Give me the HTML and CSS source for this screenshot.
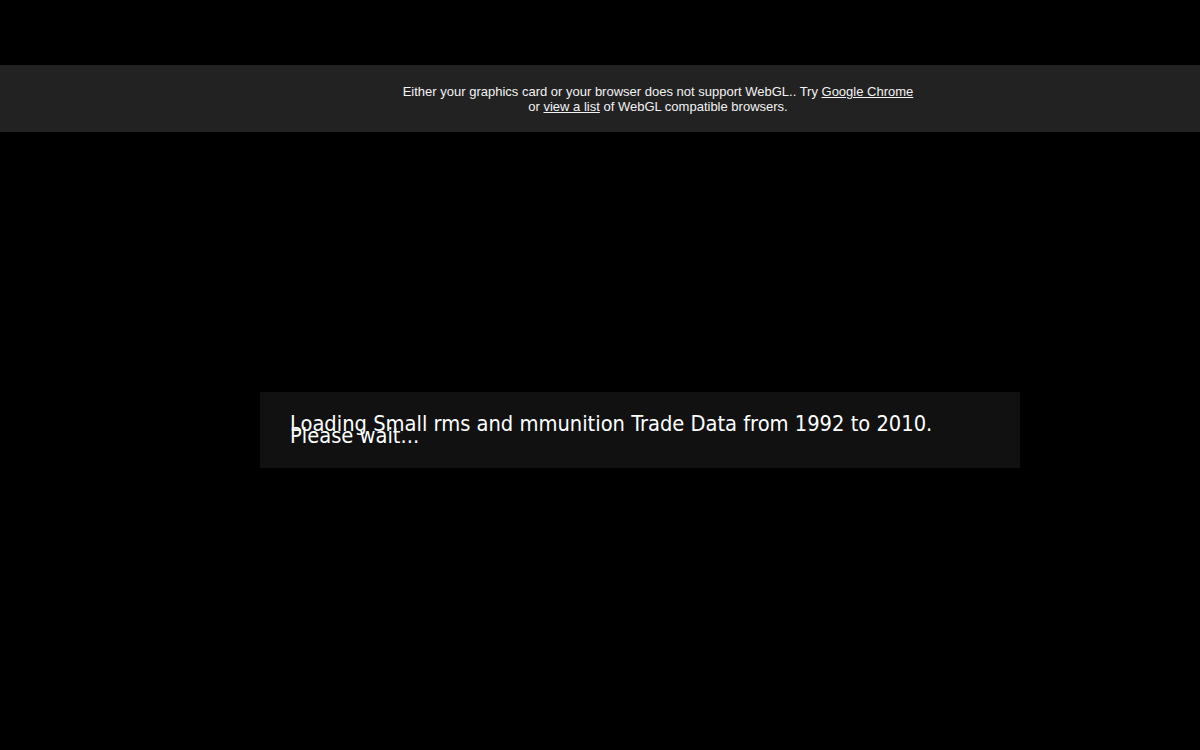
FILE: index.html
```html
<!DOCTYPE html>
<html>
<head>
<meta charset="utf-8">
<link rel="stylesheet" href="styles.css">
</head>
<body>
<div class="notice">
  <div class="notice-text">Either your graphics card or your browser does not support WebGL.. Try <a href="#">Google Chrome</a><br>or <a href="#">view a list</a> of WebGL compatible browsers.</div>
</div>
<div class="loading">
  <div class="loading-text">Loading Small rms and mmunition Trade Data from 1992 to 2010. Please wait...</div>
</div>
</body>
</html>
```
FILE: styles.css
```css
html, body {
  margin: 0;
  padding: 0;
  background: #000;
  height: 100%;
}
body {
  overflow: hidden;
}
.notice {
  margin-top: 65px;
  height: 67px;
  box-sizing: border-box;
  background: #222;
  padding: 19px 0 0 116px;
  text-align: center;
  font-family: "Liberation Sans", Arial, sans-serif;
  font-size: 13px;
  line-height: 15px;
  color: #f2f2f2;
}
.notice a {
  color: #f2f2f2;
  text-decoration: underline;
}
.loading {
  margin: 260px 0 0 260px;
  width: 760px;
  box-sizing: border-box;
  background: #111;
  padding: 26px 30px 26px;
}
.loading-text {
  font-family: "DejaVu Sans Condensed", "DejaVu Sans", sans-serif;
  font-stretch: condensed;
  font-size: 21.7px;
  line-height: 12px;
  color: #fff;
}
```
